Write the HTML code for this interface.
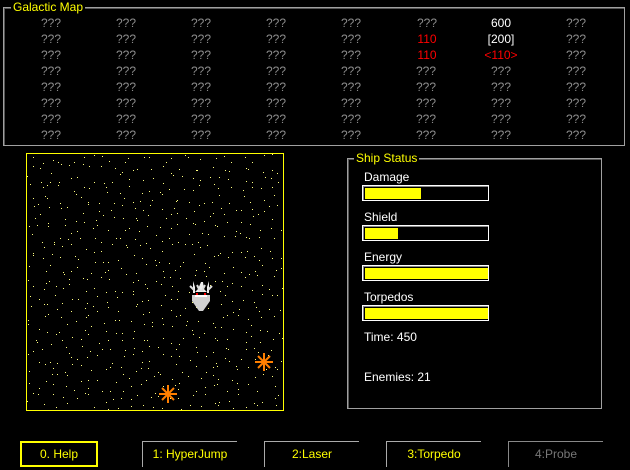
<!DOCTYPE html>
<html><head><style>
body{margin:0;width:630px;height:470px;background:#000;position:relative;overflow:hidden;font-family:"Liberation Sans",sans-serif;font-size:12px;}
.abs{position:absolute}
.gb{position:absolute;border:1px solid #a0a0a0;box-shadow:inset 1px 1px 0 #555;}
.leg{position:absolute;background:#000;color:#ff0;padding:0 2px;font-size:12px;line-height:13px}
.c{position:absolute;width:60px;text-align:center;color:#8c8c8c;line-height:14px}
.lab{position:absolute;left:364px;color:#fff;line-height:14px}
.bar{position:absolute;left:362px;width:125px;height:14px;border:1px solid #fff;box-shadow:inset 1px 1px 0 #888}
.bar div{position:absolute;left:2px;top:2px;height:11px;background:#ff0}
.btn{position:absolute;top:441px;height:25px;width:94px;border-left:1px solid #aaa;border-top:1px solid #aaa;color:#ff0;text-align:center;line-height:24px}
</style></head><body>
<div class="gb" style="left:3px;top:7px;width:620px;height:137px"></div>
<div class="leg" style="left:11px;top:1px">Galactic Map</div>
<div id="grid"></div>
<div class="c" style="left:397px;top:16px">???</div>
<div class="c" style="left:471px;top:16px;color:#fff">600</div>
<div class="c" style="left:546px;top:16px">???</div>
<div class="c" style="left:397px;top:32px;color:#f00">110</div>
<div class="c" style="left:471px;top:32px;color:#fff">[200]</div>
<div class="c" style="left:546px;top:32px">???</div>
<div class="c" style="left:397px;top:48px;color:#f00">110</div>
<div class="c" style="left:471px;top:48px;color:#f00">&lt;110&gt;</div>
<div class="c" style="left:546px;top:48px">???</div>
<div class="abs" style="left:26px;top:153px;width:256px;height:256px;border:1px solid #ff0;background:#000"><svg id="stars" width="256" height="256"></svg></div>
<script>
var g=document.getElementById('grid'),h='';
for(var r=0;r<8;r++)for(var c=0;c<8;c++){if(r<3&&c>=5)continue;h+='<div class="c" style="left:'+(21+c*75)+'px;top:'+(16+r*16)+'px">???</div>';}
g.innerHTML=h;
var s=12345,d='';function rnd(){s=(s*1103515245+12345)%2147483648;return s/2147483648;}
for(var y=0;y<256;y+=10)for(var x=0;x<256;x+=10){d+='<rect x="'+Math.floor(x+rnd()*10)+'" y="'+Math.floor(y+rnd()*10)+'" width="1" height="1" fill="#ffff80"/>';}
document.getElementById('stars').innerHTML=d;
</script>
<svg class="abs" style="left:188px;top:279px" width="28" height="36" viewBox="0 0 28 36">
<path d="M5 2 L7 8 L7 14 L5 14 Z M21 2 L19 8 L19 14 L21 14 Z M13 3 L15 3 L16 10 L19 13 L7 13 L10 10 Z" fill="#eee"/>
<path d="M2 7 L6 11 M24 7 L20 11 M9 6 L12 12 M17 6 L14 12" stroke="#ddd" stroke-width="2"/>
<path d="M4 16 L22 16 L22 22 L15 32 L11 32 L4 22 Z" fill="#d0d0d0"/>
<path d="M7 17 L19 17" stroke="#fff" stroke-width="2"/>
<rect x="8" y="14" width="2" height="2" fill="#f00"/><rect x="16" y="14" width="2" height="2" fill="#f00"/>
</svg>
<svg class="abs" style="left:254px;top:352px" width="20" height="20" viewBox="0 0 20 20"><g stroke="#ff7f00" stroke-width="2"><path d="M10 1V19M1 10H19M4 4L16 16M16 4L4 16"/></g></svg>
<svg class="abs" style="left:158px;top:384px" width="20" height="20" viewBox="0 0 20 20"><g stroke="#ff7f00" stroke-width="2"><path d="M10 1V19M1 10H19M4 4L16 16M16 4L4 16"/></g></svg>
<div class="gb" style="left:347px;top:158px;width:253px;height:249px"></div>
<div class="leg" style="left:354px;top:152px">Ship Status</div>
<div class="lab" style="top:170px">Damage</div>
<div class="bar" style="top:185px"><div style="width:56px"></div></div>
<div class="lab" style="top:210px">Shield</div>
<div class="bar" style="top:225px"><div style="width:33px"></div></div>
<div class="lab" style="top:250px">Energy</div>
<div class="bar" style="top:265px"><div style="width:123px"></div></div>
<div class="lab" style="top:290px">Torpedos</div>
<div class="bar" style="top:305px"><div style="width:123px"></div></div>
<div class="lab" style="top:330px">Time: 450</div>
<div class="lab" style="top:370px">Enemies: 21</div>
<div class="abs" style="left:20px;top:441px;width:74px;height:22px;border:2px solid #ff0;color:#ff0;text-align:center;line-height:22px">0. Help</div>
<div class="btn" style="left:142px">1: HyperJump</div>
<div class="btn" style="left:264px">2:Laser</div>
<div class="btn" style="left:386px">3:Torpedo</div>
<div class="btn" style="left:508px;color:#777;border-color:#888">4:Probe</div>
</body></html>
